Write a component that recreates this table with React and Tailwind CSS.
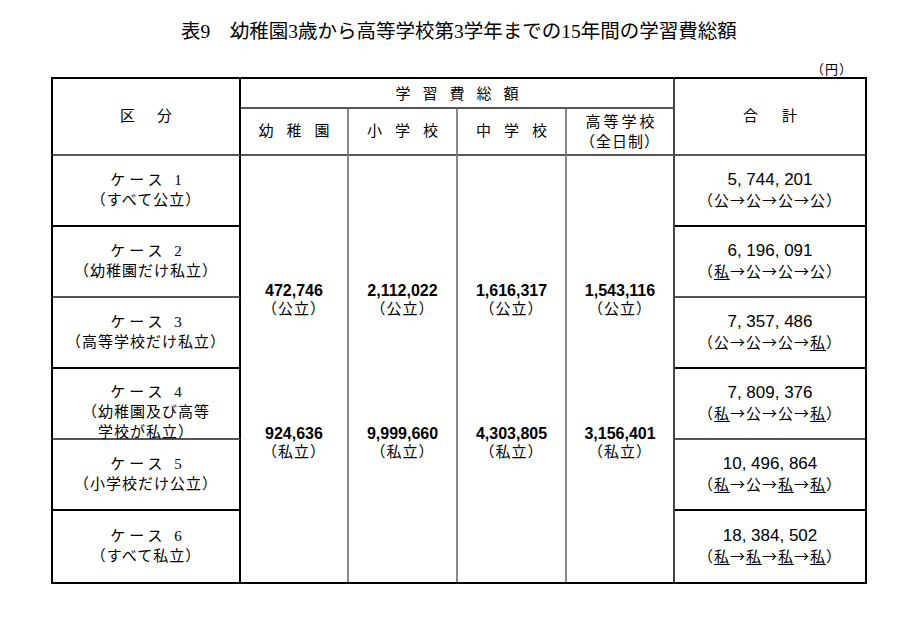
const cases = [
  { label: '1', sub: ['（すべて公立）'], total: '5, 744, 201', path: ['公', '公', '公', '公'] },
  { label: '2', sub: ['（幼稚園だけ私立）'], total: '6, 196, 091', path: ['私', '公', '公', '公'] },
  { label: '3', sub: ['（高等学校だけ私立）'], total: '7, 357, 486', path: ['公', '公', '公', '私'] },
  { label: '4', sub: ['（幼稚園及び高等', '学校が私立）'], total: '7, 809, 376', path: ['私', '公', '公', '私'] },
  { label: '5', sub: ['（小学校だけ公立）'], total: '10, 496, 864', path: ['私', '公', '私', '私'] },
  { label: '6', sub: ['（すべて私立）'], total: '18, 384, 502', path: ['私', '私', '私', '私'] },
];

// horizontal rules between the case rows alternate black / grey
const rowLines = [
  'border-b-2 border-b-black',
  'border-b-2 border-b-[#555]',
  'border-b-2 border-b-black',
  'border-b-2 border-b-[#555]',
  'border-b-2 border-b-black',
  '',
];

const schools = [
  { key: 'k', head: ['幼', '稚', '園'], pub: '472,746', priv: '924,636' },
  { key: 'e', head: ['小', '学', '校'], pub: '2,112,022', priv: '9,999,660' },
  { key: 'j', head: ['中', '学', '校'], pub: '1,616,317', priv: '4,303,805' },
  { key: 'h', head: null, pub: '1,543,116', priv: '3,156,401' },
];

function Spaced({ chars, gap }) {
  return (
    <div className={`flex justify-center ${gap}`}>
      {chars.map((c, i) => (
        <span key={i}>{c}</span>
      ))}
    </div>
  );
}

function Path({ items }) {
  return (
    <div className="font-['Noto_Sans_CJK_JP',sans-serif] text-[15px] tracking-[1px] leading-[20px]">
      （
      {items.map((p, i) => (
        <span key={i}>
          {i > 0 && '→'}
          <span className={p === '私' ? 'underline underline-offset-2' : ''}>{p}</span>
        </span>
      ))}
      ）
    </div>
  );
}

function Amount({ value, kind }) {
  return (
    <div className="text-center">
      <div className="font-['Liberation_Sans',sans-serif] font-bold text-[16px] leading-[17px]">{value}</div>
      <div className="font-['Noto_Sans_CJK_JP',sans-serif] text-[15px] tracking-[1px] leading-[18px]">（{kind}）</div>
    </div>
  );
}

export default function App() {
  return (
    <div className="w-[924px] h-[621px] bg-white pt-[19px] pl-[51px] text-black font-['Liberation_Serif','Noto_Sans_CJK_JP',serif]">
      <div className="w-[816px]">
        <h1 className="text-center text-[19.5px] leading-[26px]">
          表9　幼稚園3歳から高等学校第3学年までの15年間の学習費総額
        </h1>
        <div className="mt-[16px] pr-[14px] text-right text-[13px] tracking-[1px] leading-[16px] font-['Noto_Sans_CJK_JP',sans-serif]">
          （円）
        </div>

        <div className="grid grid-cols-[188px_108px_109px_109px_108px_190px] grid-rows-[30px_47px_repeat(6,71px)] border-2 border-black text-[15px]">
          {/* header */}
          <div className="row-span-2 flex items-center justify-center border-r-2 border-r-black border-b-2 border-b-[#555]">
            <Spaced chars={['区', '分']} gap="gap-[22px]" />
          </div>
          <div className="col-span-4 flex items-center justify-center border-r-2 border-r-[#444] border-b-2 border-b-[#555] pt-[2px]">
            <Spaced chars={['学', '習', '費', '総', '額']} gap="gap-[12px]" />
          </div>
          <div className="row-span-2 flex items-center justify-center border-b-2 border-b-[#555]">
            <Spaced chars={['合', '計']} gap="gap-[24px]" />
          </div>

          {schools.map((s, i) => (
            <div
              key={s.key}
              className={`flex flex-col items-center justify-center border-b-2 border-b-[#555] border-r-2 ${
                i === 3 ? 'border-r-[#444]' : 'border-r-[#888]'
              }`}
            >
              {s.head ? (
                <Spaced chars={s.head} gap="gap-[13px]" />
              ) : (
                <div className="text-center leading-[20px]">
                  <div className="tracking-[3px] pl-[3px]">高等学校</div>
                  <div className="tracking-[1px]">（全日制）</div>
                </div>
              )}
            </div>
          ))}

          {/* body */}
          {cases.map((c, i) => (
            <div key={c.label} className="contents">
              <div
                className={`col-start-1 flex flex-col items-center border-r-2 border-r-black text-[15px] leading-[20px] ${rowLines[i]} ${
                  c.sub.length > 1 ? 'justify-start pt-[13px]' : 'justify-center pb-[2px]'
                }`}
              >
                <div className="tracking-[4px] pl-[4px]">ケース {c.label}</div>
                {c.sub.map((line, j) => (
                  <div key={j} className="text-center tracking-[1px]">
                    {line}
                  </div>
                ))}
              </div>

              {i === 0 &&
                schools.map((s, k) => (
                  <div
                    key={s.key}
                    className={`row-span-6 flex flex-col items-center justify-center gap-[108px] pt-[4px] border-r-2 ${
                      k === 3 ? 'border-r-[#444]' : 'border-r-[#888]'
                    }`}
                  >
                    <Amount value={s.pub} kind="公立" />
                    <Amount value={s.priv} kind="私立" />
                  </div>
                ))}

              <div className={`col-start-6 flex flex-col items-center justify-center pb-[2px] ${rowLines[i]}`}>
                <div className="font-['Liberation_Sans',sans-serif] text-[17px] leading-[20px]">{c.total}</div>
                <Path items={c.path} />
              </div>
            </div>
          ))}
        </div>
      </div>
    </div>
  );
}
